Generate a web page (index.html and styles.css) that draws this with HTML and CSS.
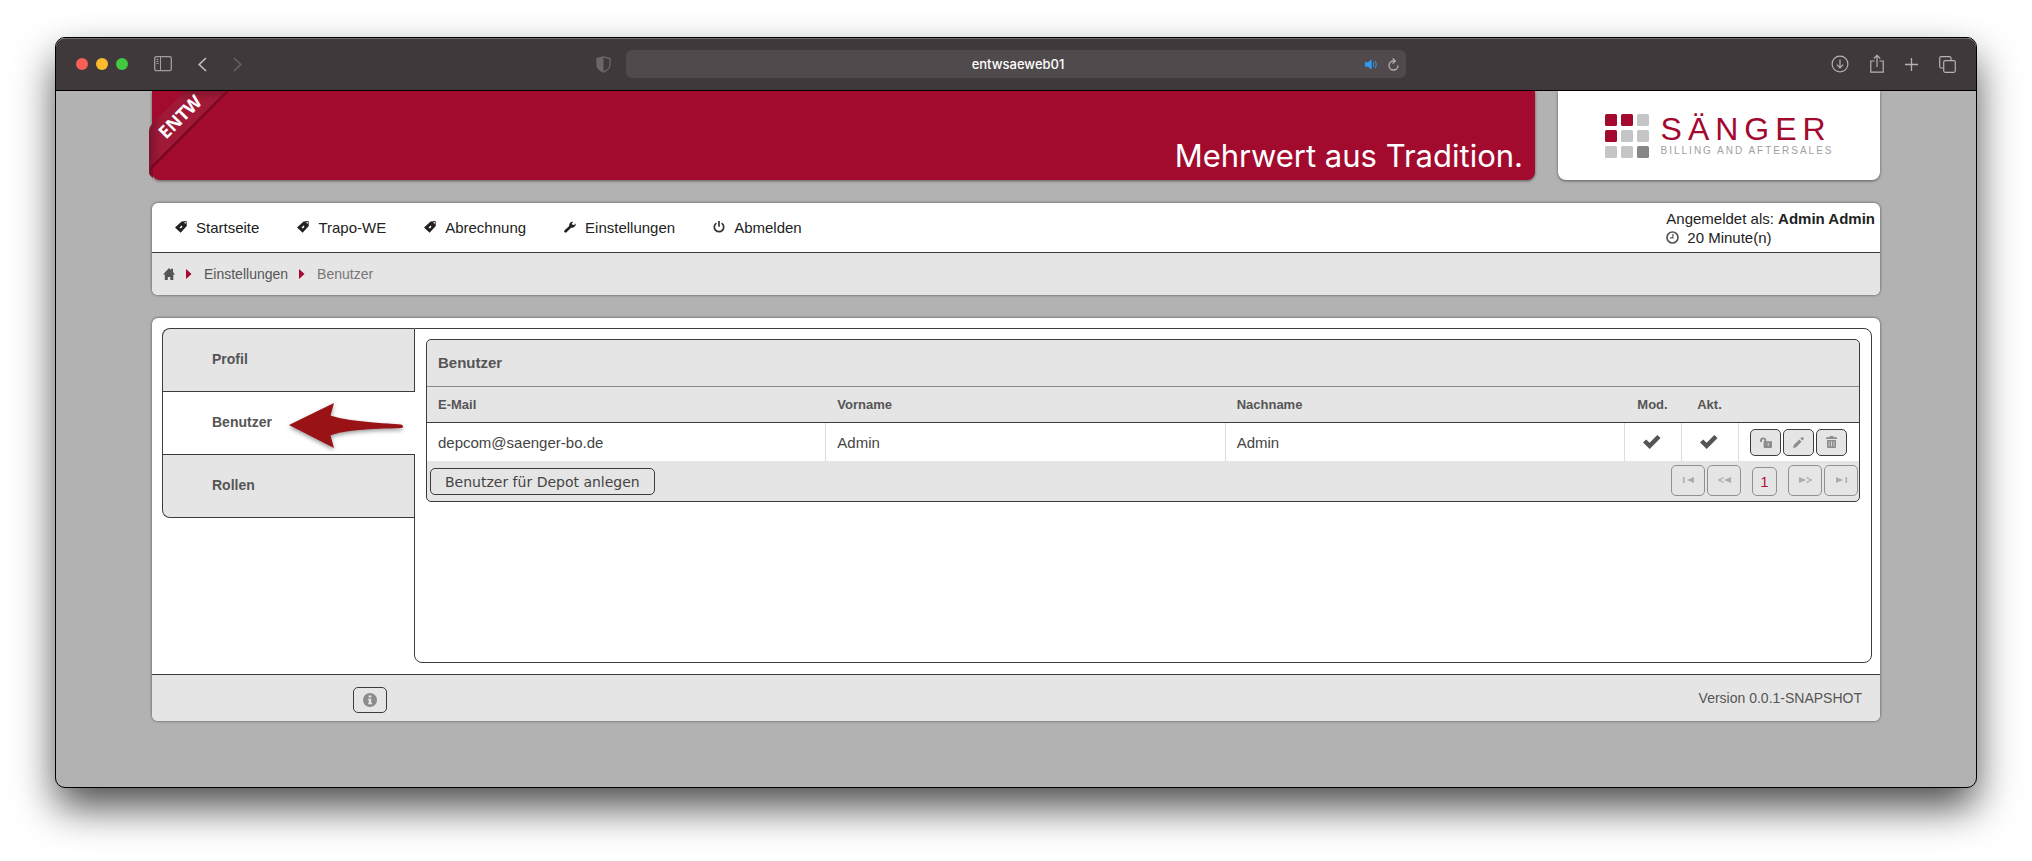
FILE: index.html
```
<!DOCTYPE html>
<html lang="de">
<head>
<meta charset="utf-8">
<title>entwsaeweb01</title>
<link rel="stylesheet" href="styles.css">
</head>
<body>
<svg class="defs" aria-hidden="true">
  <symbol id="tag" viewBox="0 0 12 12"><path fill-rule="evenodd" d="M6.6.4 11.6 0 11.8 5 5.6 11.8 0 6.6zM10.200 1.100a.7.7 0 1 0 .1 0zM6.500 4.600 4.600 6.500 5.900 7.600 7.500 5.800z"/></symbol>
  <symbol id="check" viewBox="0 0 18 14"><path d="M0 7.6 3.2 4.5 6.6 7.8 14.3 0 17.6 3.1 6.7 13.9z"/></symbol>
</svg>
<div class="window">
  <header class="toolbar">
    <div class="toolbar-left">
      <div class="lights"><i class="light red"></i><i class="light yellow"></i><i class="light green"></i></div>
      <button class="tool sidebar" aria-label="Seitenleiste"><svg width="18" height="16" viewBox="0 0 18 16" fill="none" stroke="currentColor"><rect x=".7" y=".7" width="16.6" height="14" rx="1.6" stroke-width="1.3"/><path d="M6.5 1v14M2.5 3.5h2M2.5 5.5h2M2.5 7.5h2"/></svg></button>
      <button class="tool back" aria-label="Zurück"><svg width="9" height="15" viewBox="0 0 9 15" fill="none" stroke="currentColor" stroke-width="1.6"><path d="M8 1 1.2 7.5 8 14"/></svg></button>
      <button class="tool forward" aria-label="Vorwärts"><svg width="9" height="15" viewBox="0 0 9 15" fill="none" stroke="currentColor" stroke-width="1.6"><path d="m1 1 6.8 6.5L1 14"/></svg></button>
      <button class="tool shield" aria-label="Datenschutzbericht"><svg width="15" height="17" viewBox="0 0 15 17"><path d="M7.5.8 14 2.6v6.2c0 3.4-2.6 5.6-6.5 7.4C3.600 14.400 1 12.200 1 8.800V2.600z" fill="none" stroke="currentColor" stroke-width="1.300"/><path d="M7.500.8V16.200C3.600 14.400 1 12.200 1 8.800V2.600z" fill="currentColor"/></svg></button>
    </div>
    <div class="address">
      <span class="address-text">entwsaeweb01</span>
      <button class="tool sound" aria-label="Ton aus"><svg width="13" height="11" viewBox="0 0 13 11"><path d="M0 3.300h2.800L6.600.4v10.200L2.800 7.700H0z" fill="currentColor"/><path d="M8.300 3.500q1.200 2 0 4M10.300 2q2.200 3.500 0 7" fill="none" stroke="currentColor"/></svg></button>
      <button class="tool reload" aria-label="Neu laden"><svg width="11" height="13" viewBox="0 0 11 13" fill="none" stroke="currentColor" stroke-width="1.300"><path d="M7 3H5.500A4.500 4.500 0 1 0 10 7.500M4.600.5 7.300 3 4.600 5.600"/></svg></button>
    </div>
    <div class="toolbar-right">
      <button class="tool" aria-label="Downloads"><svg width="18" height="18" viewBox="0 0 18 18" fill="none" stroke="currentColor" stroke-width="1.200"><circle cx="9" cy="9" r="7.900"/><path d="M9 4.500v8.300M5.800 9.700 9 13l3.200-3.300"/></svg></button>
      <button class="tool share" aria-label="Teilen"><svg width="14" height="20" viewBox="0 0 14 20" fill="none" stroke="currentColor" stroke-width="1.200"><path d="M4.500 7H.8v11.200h12.400V7H9.500M7 13V1.500M3.800 4.500 7 1.300l3.200 3.200"/></svg></button>
      <button class="tool" aria-label="Neuer Tab"><svg width="13" height="13" viewBox="0 0 13 13" stroke="currentColor" stroke-width="1.300"><path d="M6.500 0v13M0 6.500h13"/></svg></button>
      <button class="tool" aria-label="Tabübersicht"><svg width="17" height="17" viewBox="0 0 17 17" fill="none" stroke="currentColor" stroke-width="1.200"><rect x="4.700" y="4.700" width="11.600" height="11.600" rx="1.500"/><path d="M4.700 12H2.200Q.7 12 .7 10.500V2.200Q.7.700 2.200.700h8.300Q12 .7 12 2.200v2.500"/></svg></button>
    </div>
  </header>

  <div class="page">
    <div class="masthead">
      <div class="banner">
        <svg class="ribbon" width="84" height="90" viewBox="0 0 84 90" role="img" aria-label="ENTW">
          <defs>
            <linearGradient id="side" x1="0" x2="1"><stop offset="0" stop-color="#5a0c20" stop-opacity=".5"/><stop offset="1" stop-color="#5a0c20" stop-opacity="0"/></linearGradient>
            <linearGradient id="top" x1="0" x2="0" y1="0" y2="1"><stop offset="0" stop-color="#5a0c20" stop-opacity=".4"/><stop offset="1" stop-color="#5a0c20" stop-opacity="0"/></linearGradient>
          </defs>
          <path d="M0 75v7q0 2 4 5V73z" fill="#7a1229"/>
          <path d="M76 0h4L2 79V75z" fill="#5e0519" opacity=".6"/>
          <path d="M36 0h41L0 77V40q0-4 3-7z" fill="#a01a38"/>
          <path d="M0 77V40q0-4 3-7L12 24V65z" fill="url(#side)"/>
          <path d="M36 0h41L68 9H27z" fill="url(#top)"/>
          <text class="ribbon-text" transform="translate(17 49) rotate(-45)">ENTW</text>
        </svg>
        <p class="slogan">Mehrwert aus Tradition.</p>
      </div>
      <div class="brand">
        <svg class="brand-mark" width="44" height="44" viewBox="0 0 44 44"><g fill="#a3082f"><rect width="12" height="12" rx="1.500"/><rect x="16" width="12" height="12" rx="1.500"/><rect y="16" width="12" height="12" rx="1.500"/></g><rect x="32" width="12" height="12" rx="1.500"/><rect x="16" y="16" width="12" height="12" rx="1.500"/><rect x="32" y="16" width="12" height="12" rx="1.500"/><rect y="32" width="12" height="12" rx="1.500"/><rect x="16" y="32" width="12" height="12" rx="1.500"/><rect x="32" y="32" width="12" height="12" rx="1.500" fill="#868789"/></svg>
        <div class="brand-text"><strong class="brand-name">SÄNGER</strong><span class="brand-line">BILLING AND AFTERSALES</span></div>
      </div>
    </div>

    <div class="card">
      <div class="menubar">
        <nav class="menu" aria-label="Hauptmenü">
          <a class="menu-item" href="#"><svg width="12" height="12"><use href="#tag"/></svg>Startseite</a>
          <a class="menu-item" href="#"><svg width="12" height="12"><use href="#tag"/></svg>Trapo-WE</a>
          <a class="menu-item" href="#"><svg width="12" height="12"><use href="#tag"/></svg>Abrechnung</a>
          <a class="menu-item" href="#"><svg width="12" height="12" viewBox="0 0 12 12"><path d="M.4 9.400 5.200 5C4.800 2.600 6.800.3 9.300.7L7.800 2.400 8.500 3.800 10 4.100 11.700 2.400C12.200 5 9.800 7.200 7.200 6.700L2.500 11.300Q1.500 12 .6 11.200T.4 9.400z"/></svg>Einstellungen</a>
          <a class="menu-item" href="#"><svg width="12" height="12" viewBox="0 0 12 12" fill="none" stroke="#333" stroke-width="1.700"><path d="M3.400 2.100a4.700 4.700 0 1 0 5.200 0M6 0v5.800"/></svg>Abmelden</a>
        </nav>
        <div class="session">
          <span>Angemeldet als: <b>Admin Admin</b></span>
          <span class="timer"><svg width="13" height="13" viewBox="0 0 13 13" fill="none" stroke="#555"><circle cx="6.500" cy="6.500" r="5.500" stroke-width="1.700"/><path d="M6.900 3v3.800H4" stroke-width="1.200"/></svg>20 Minute(n)</span>
        </div>
      </div>
      <nav class="crumbs" aria-label="Brotkrumen">
        <a class="home" href="#" aria-label="Startseite"><svg width="12" height="12" viewBox="0 0 12 12"><path d="M6 0 8 2V.8h2V4l2 2.400h-1.700V12H7.300V9H4.800v3H1.800V6.400H0z"/></svg></a>
        <svg class="crumb-arrow" width="6" height="10" viewBox="0 0 6 10"><path d="M0 0 5.500 5 0 10z"/></svg>
        <a class="crumb" href="#">Einstellungen</a>
        <svg class="crumb-arrow" width="6" height="10" viewBox="0 0 6 10"><path d="M0 0 5.500 5 0 10z"/></svg>
        <span class="crumb current">Benutzer</span>
      </nav>
    </div>

    <div class="card">
      <main class="content">
        <nav class="tabs" aria-label="Einstellungen">
          <a class="tab" href="#">Profil</a>
          <a class="tab active" href="#" aria-current="page">Benutzer
            <svg class="pointer" width="124" height="56" viewBox="0 0 124 56"><path d="M4 27 49 5 45.500 17.500C58 22 80 24 116 26.500Q118 27 118 28.500T116 30C85 31 58 32 45.500 37.500L49 50z"/></svg></a>
          <a class="tab" href="#">Rollen</a>
        </nav>
        <section class="panel">
          <div class="grid">
            <h1 class="grid-title">Benutzer</h1>
            <table class="users">
              <colgroup><col><col><col><col class="col-flag"><col class="col-flag"><col class="col-actions"></colgroup>
              <thead><tr><th>E-Mail</th><th>Vorname</th><th>Nachname</th><th class="flag">Mod.</th><th class="flag">Akt.</th><th></th></tr></thead>
              <tbody><tr>
                <td>depcom@saenger-bo.de</td><td>Admin</td><td>Admin</td>
                <td class="flag"><svg width="18" height="14" role="img" aria-label="Ja"><use href="#check"/></svg></td>
                <td class="flag"><svg width="18" height="14" role="img" aria-label="Ja"><use href="#check"/></svg></td>
                <td><div class="actions">
                  <button class="btn icon-btn" aria-label="Entsperren"><svg width="12" height="11" viewBox="0 0 12 11"><path d="M1 5V3.600a2.200 2.200 0 0 1 4.400 0V6" fill="none" stroke="currentColor" stroke-width="1.900"/><path fill-rule="evenodd" d="M3.600 4.300H12V10q0 1-1 1H4.600q-1 0-1-1zM7.700 6.300v2.400h1V6.300z"/></svg></button>
                  <button class="btn icon-btn" aria-label="Bearbeiten"><svg width="11" height="11" viewBox="0 0 11 11"><path d="M0 11 .8 8 6.300 2.500l2.200 2.200L3 10.200zM7.300 1.500 8.300.6q1-.8 1.900 0t.2 1.900l-1 1.100z"/></svg></button>
                  <button class="btn icon-btn" aria-label="Löschen"><svg width="11" height="12" viewBox="0 0 11 12"><path d="M0 1.300h3.500V0h4v1.300H11V3H0z"/><path fill-rule="evenodd" d="M1 4h9v7q0 1-1 1H2q-1 0-1-1zm1.700 1.200v5.300h.7V5.200zm2.400 0v5.300h.8V5.200zm2.500 0v5.300h.7V5.200z"/></svg></button>
                </div></td>
              </tr></tbody>
            </table>
            <div class="grid-foot">
              <button class="btn create">Benutzer für Depot anlegen</button>
              <div class="pager">
                <button class="btn page-btn" disabled aria-label="Erste Seite"><svg width="11" height="8" viewBox="0 0 11 8"><path d="M0 1h1.500v6H0zM11 1v6L4 4z"/></svg></button>
                <button class="btn page-btn" disabled aria-label="Vorherige Seite"><svg width="13" height="8" viewBox="0 0 13 8"><path d="M13 1v6L6 4z"/><path d="M5.500 1.500 1 4l4.500 2.500" fill="none" stroke="currentColor" stroke-width="1.200"/></svg></button>
                <button class="btn number" aria-current="page">1</button>
                <button class="btn page-btn" disabled aria-label="Nächste Seite"><svg width="13" height="8" viewBox="0 0 13 8"><path d="M0 1v6l7-3z"/><path d="M7.500 1.500 12 4 7.500 6.500" fill="none" stroke="currentColor" stroke-width="1.200"/></svg></button>
                <button class="btn page-btn" disabled aria-label="Letzte Seite"><svg width="11" height="8" viewBox="0 0 11 8"><path d="M9.500 1H11v6H9.500zM0 1v6l7-3z"/></svg></button>
              </div>
            </div>
          </div>
        </section>
      </main>
      <footer class="footer">
        <button class="btn info" aria-label="Information"><svg width="14" height="14" viewBox="0 0 14 14"><path fill-rule="evenodd" d="M7 0a7 7 0 1 0 .01 0zM5.700 2.500h2.600v2H5.700zM5.200 5.700h3v4h.8v1.500H5.200V9.700h.6V7.200h-.6z"/></svg></button>
        <span>Version 0.0.1-SNAPSHOT</span>
      </footer>
    </div>
  </div>
</div>
</body>
</html>
```
FILE: styles.css
```
* { box-sizing: border-box; }

body {
  margin: 0;
  padding: 37px 55px 73px;
  background: #fff;
  color: #333;
  font: 15px/19px "Liberation Sans", Arial, sans-serif;
}

svg { display: block; flex: none; fill: currentColor; }
svg[fill="none"] { fill: none; }
a { color: inherit; text-decoration: none; }
button { font: inherit; color: inherit; cursor: pointer; }
.defs { position: absolute; width: 0; height: 0; }

/* The blurred layer behind the frame is the window's shadow. */
.window {
  position: relative;
  border: 1px solid #000;
  border-radius: 10px;
  background: #b2b2b2;
}
.window::before {
  content: "";
  position: absolute;
  inset: 20px 0 -20px;
  z-index: -1;
  border-radius: 10px;
  background: rgba(0, 0, 0, .7);
  filter: blur(20px);
}

/* Browser toolbar */
.toolbar {
  display: grid;
  grid-template-columns: 1fr minmax(0, 780px) 1fr;
  align-items: center;
  height: 53px;
  padding-bottom: 1px;
  border-top: 1px solid #6f6b6c;
  border-bottom: 1px solid #000;
  border-radius: 9px 9px 0 0;
  background: #3f393b;
  color: #b5b2b3;
}
.toolbar-left { display: flex; align-items: center; padding: 0 15px 0 20px; }
.lights { display: flex; gap: 8px; margin-right: 26px; }
.light { width: 12px; height: 12px; border-radius: 50%; }
.red { background: #f75f57; }
.yellow { background: #fcbb2f; }
.green { background: #43c83f; }
.tool { display: block; padding: 0; border: 0; background: none; }
.sidebar { margin-right: 26px; color: #a19e9f; }
.back { margin-right: 26px; color: #c2c0c1; }
.forward { color: #676264; }
.shield { margin-left: auto; color: #6b6668; }
.address {
  display: grid;
  grid-template-columns: 38px 1fr 13px 11px;
  align-items: center;
  gap: 10px;
  height: 28px;
  padding: 0 7px;
  border-radius: 6px;
  background: #504a4c;
}
.address-text {
  grid-column: 2;
  color: #fff;
  font: 500 13px/18px Inter, sans-serif;
  text-align: center;
}
.sound { color: #2f9bf5; }
.toolbar-right {
  display: flex;
  align-items: center;
  justify-content: flex-end;
  gap: 21px;
  padding-right: 20px;
}

/* Page */
.page {
  display: flex;
  flex-direction: column;
  gap: 23px;
  padding: 0 5% 66px;
}
.masthead { display: grid; grid-template-columns: 1383fr 322fr; gap: 23px; }
.banner, .brand {
  height: 89px;
  border-radius: 0 0 8px 8px;
  box-shadow: 0 1px 3px rgba(0, 0, 0, .5);
}
.banner {
  position: relative;
  display: flex;
  align-items: flex-end;
  justify-content: flex-end;
  padding: 0 12px 4px;
  background: #a30b2e;
}
.ribbon { position: absolute; top: 0; left: -3px; overflow: visible; }
.ribbon-text { fill: #fff; font: bold 18px "Open Sans", sans-serif; }
.slogan { margin: 0; color: #fff; font: 31px/40px Inter, sans-serif; }
.brand {
  display: flex;
  align-items: center;
  justify-content: center;
  gap: 12px;
  background: #fff;
}
.brand-mark { fill: #c4c5c7; }
.brand-text { display: flex; flex-direction: column; }
.brand-name { color: #a3082f; font: 32px/30px "Liberation Sans", sans-serif; letter-spacing: 6px; }
.brand-line { color: #a0a0a2; font: 10px/13px "Liberation Sans", sans-serif; letter-spacing: 2px; }

.card {
  overflow: hidden;
  border-radius: 6px;
  background: #fff;
  box-shadow: 0 0 3px rgba(0, 0, 0, .6);
}
.menubar {
  display: flex;
  align-items: center;
  justify-content: space-between;
  height: 50px;
  padding: 0 5px 0 23px;
  border-bottom: 1px solid #3c3c3c;
  color: #222;
}
.menu { display: flex; gap: 38px; }
.menu-item { display: flex; align-items: baseline; gap: 9px; }
.menu-item svg { margin-bottom: 2px; }
.session { display: flex; flex-direction: column; }
.timer { display: flex; align-items: center; gap: 8px; }
.crumbs {
  display: flex;
  align-items: center;
  height: 42px;
  padding: 0 11px;
  background: #e5e5e5;
  color: #555;
  font-size: 14px;
}
.crumb-arrow { margin: 0 12px 0 11px; color: #a8082f; }
.current { color: #777; }

.content {
  display: grid;
  grid-template-columns: 252px 1fr;
  padding: 10px 8px 11px 10px;
}
.tabs { color: #555; font-size: 14px; font-weight: bold; }
.tab {
  position: relative;
  display: flex;
  align-items: center;
  height: 63px;
  padding: 0 0 2px 49px;
  border: 1px solid #3c3c3c;
  border-width: 1px 0 0 1px;
  background: #e5e5e5;
}
.tab:first-child { border-top-left-radius: 8px; }
.tab:last-child { height: 64px; border-bottom-width: 1px; border-bottom-left-radius: 8px; }
.active { margin-right: -1px; background: #fff; }
.pointer {
  position: absolute;
  top: 6px;
  right: 6px;
  color: #991216;
  filter: drop-shadow(0 2px 2px rgba(0, 0, 0, .4));
}
.panel {
  min-height: 335px;
  padding: 10px 11px 20px;
  border: 1px solid #3c3c3c;
  border-radius: 0 8px 8px 8px;
}
.grid {
  overflow: hidden;
  border: 1px solid #3c3c3c;
  border-radius: 5px;
  background: #e5e5e5;
}
.grid-title {
  margin: 0;
  padding: 13px 11px 14px;
  border-bottom: 1px solid #8a8a8a;
  color: #555;
  font-size: 15px;
  line-height: 19px;
}
.users { width: 100%; table-layout: fixed; border-collapse: separate; border-spacing: 0; }
.col-flag { width: 57px; }
.col-actions { width: 120px; }
.users th {
  height: 36px;
  padding: 0 11px;
  border-bottom: 1px solid #3c3c3c;
  color: #555;
  font-size: 13px;
  text-align: left;
}
.users td { height: 38px; padding: 0 11px; border-right: 1px solid #ddd; background: #fff; color: #444; }
.users td:last-child { border-right: 0; }
.users th.flag, .users td.flag { padding: 0 2px 0 0; text-align: center; color: #555; }
.flag svg { margin: 0 auto; }
.actions { display: flex; gap: 2px; }
.btn {
  display: flex;
  align-items: center;
  justify-content: center;
  padding: 0;
  border: 1px solid #3c3c3c;
  border-radius: 5px;
  background: #e5e5e5;
}
.icon-btn { width: 31px; height: 27px; color: #8d8b8c; }
.grid-foot {
  display: flex;
  align-items: center;
  justify-content: space-between;
  height: 40px;
  padding: 0 1px 2px 3px;
}
.create { height: 27px; margin-top: 3px; padding: 0 14px; color: #444; font: 14px/20px "DejaVu Sans", sans-serif; }
.pager { display: flex; align-items: flex-end; gap: 2px; }
.page-btn { width: 34px; height: 31px; border-color: #8f8f8f; color: #ababab; }
.number { width: 25px; height: 29px; margin: 0 9px; border-color: #8f8f8f; color: #b3133b; }

.footer {
  display: flex;
  align-items: center;
  justify-content: space-between;
  height: 47px;
  padding: 0 18px 0 201px;
  border-top: 1px solid #3c3c3c;
  background: #e5e5e5;
  color: #555;
  font-size: 14px;
}
.info { width: 34px; height: 26px; margin-top: 3px; color: #8d8b8c; }
```
